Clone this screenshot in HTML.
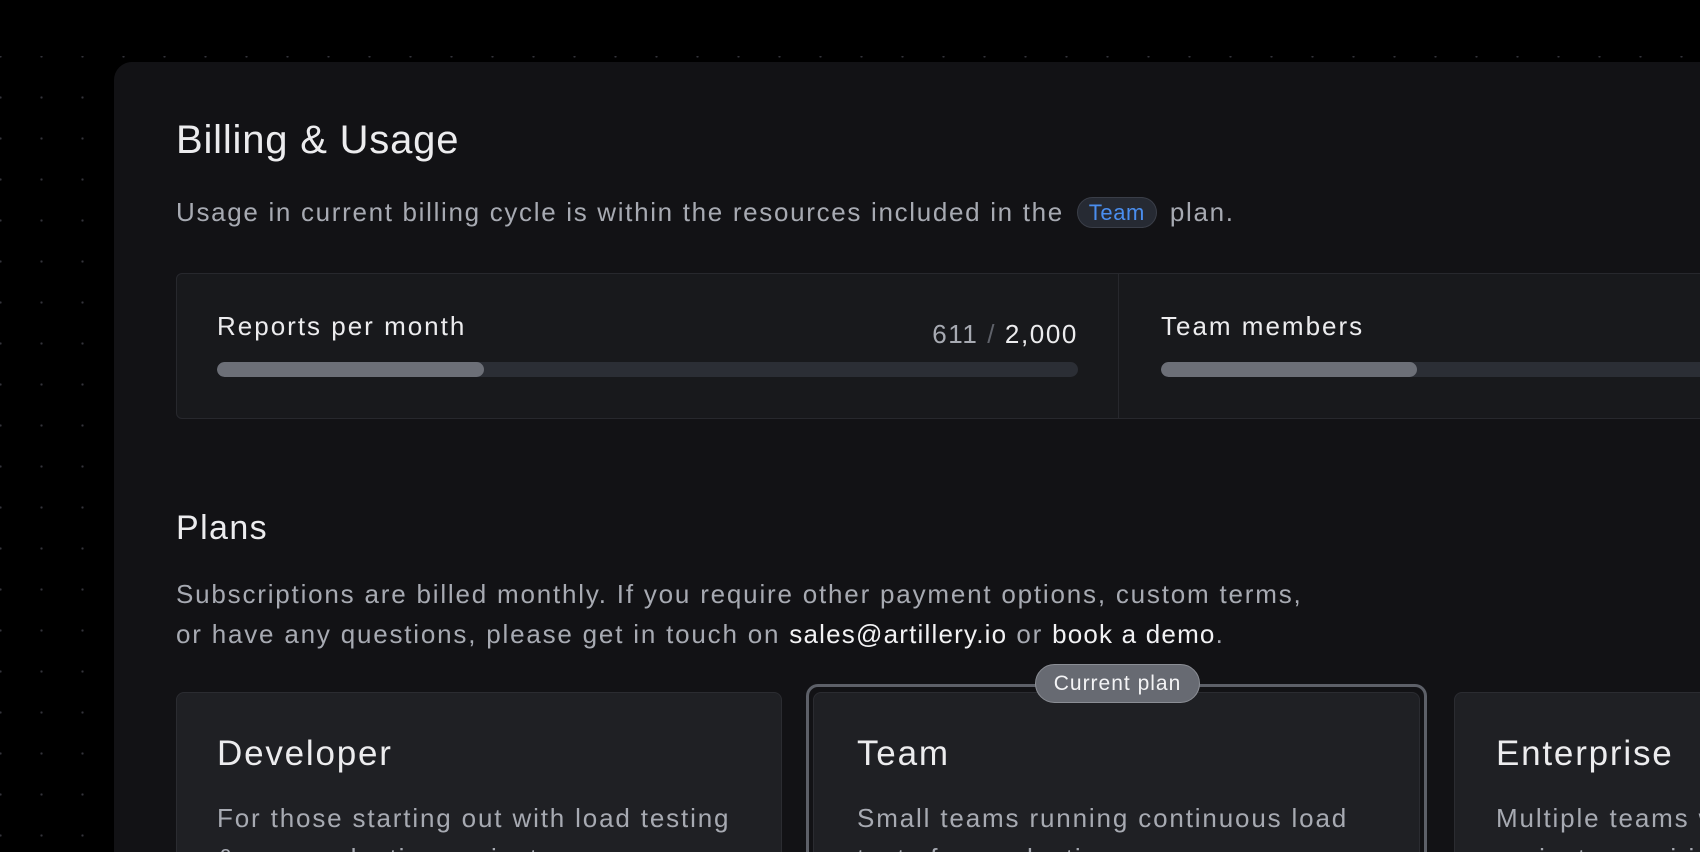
<!DOCTYPE html>
<html><head><meta charset="utf-8">
<style>
*{margin:0;padding:0;box-sizing:border-box}
html,body{width:1700px;height:852px;overflow:hidden;background:#000;font-family:"Liberation Sans","DejaVu Sans",sans-serif;position:relative}
.wrap{position:absolute;left:0;top:0;width:1700px;height:852px;overflow:hidden}
.dots{position:absolute;left:0;top:56px;width:1700px;height:796px;background-image:radial-gradient(circle,#34343a 1px,transparent 1.3px);background-size:41px 41px;background-position:-20px -20px}
.panel{position:absolute;left:114px;top:62px;width:1586px;height:790px;background:#121215;border-radius:18px 0 0 0}
.a{position:absolute;white-space:nowrap}
h1{position:absolute;left:176px;top:116px;font-size:40px;font-weight:500;color:#ececee;line-height:48px;letter-spacing:0.8px}
.sub{left:176px;top:196px;font-size:26px;color:#a7aab2;line-height:32px;letter-spacing:1.68px}
.pill{display:inline-block;background:#262a33;border:1px solid #3a3e48;border-radius:16px;color:#4a8eef;font-size:22px;padding:0 11px;line-height:29px;vertical-align:1px;margin:0 4px;letter-spacing:0.6px}
.usage{position:absolute;left:176px;top:273px;width:1600px;height:146px;background:#18191c;border:1px solid #27282d;border-radius:6px}
.div{position:absolute;left:1118px;top:273px;width:1px;height:146px;background:#27282d}
.lbl{font-size:26px;color:#ececee;font-weight:500;line-height:32px;letter-spacing:2px}
.bar{position:absolute;height:15px;border-radius:8px;background:#2b2e35;overflow:hidden}
.bar i{position:absolute;left:0;top:0;bottom:0;background:#6c6f77;border-radius:8px}
h2{position:absolute;left:176px;top:508px;font-size:34px;font-weight:500;color:#ececee;line-height:40px;letter-spacing:1.4px}
.p{left:176px;top:574px;font-size:26px;color:#a7aab2;line-height:40px;letter-spacing:1.8px}
.p b{font-weight:normal;color:#f2f2f4;letter-spacing:1.2px}
.card{position:absolute;top:692px;height:170px;background:#1f2024;border:1px solid #2b2c31;border-radius:8px}
.ring{position:absolute;left:806px;top:684px;width:621px;height:180px;border:3px solid #5d6068;border-radius:12px}
.ct{font-size:35px;color:#ececee;font-weight:500;line-height:40px;letter-spacing:1.8px}
.cd{font-size:26px;color:#a7aab2;line-height:40px;letter-spacing:1.85px}
.badge{position:absolute;left:1035px;top:664px;width:165px;height:39px;background:#676a72;border:1px solid #8b8e95;border-radius:20px;color:#f4f4f6;font-size:21px;text-align:center;line-height:37px;letter-spacing:1px}
</style></head><body><div class="wrap">
<div class="dots"></div>
<div class="panel"></div>
<h1>Billing &amp; Usage</h1>
<div class="a sub">Usage in current billing cycle is within the resources included in the <span class="pill">Team</span> plan.</div>
<div class="usage"></div>
<div class="div"></div>
<div class="a lbl" style="left:217px;top:310px">Reports per month</div>
<div class="a" style="right:622px;top:318px;font-size:26px;line-height:32px;color:#a7aab2;letter-spacing:1.6px">611 <span style="color:#5f626a">/</span> <span style="color:#ececee">2,000</span></div>
<div class="bar" style="left:217px;top:362px;width:861px"><i style="width:267px"></i></div>
<div class="a lbl" style="left:1161px;top:310px">Team members</div>
<div class="bar" style="left:1161px;top:362px;width:600px"><i style="width:256px"></i></div>
<h2>Plans</h2>
<div class="a p">Subscriptions are billed monthly. If you require other payment options, custom terms,<br>or have any questions, please get in touch on <b>sales@artillery.io</b> or <b>book a demo</b>.</div>
<div class="card" style="left:176px;width:606px"></div>
<div class="ring"></div>
<div class="card" style="left:813px;width:607px"></div>
<div class="card" style="left:1454px;width:246px;border-right:none;border-radius:8px 0 0 8px"></div>
<div class="badge">Current plan</div>
<div class="a ct" style="left:217px;top:734px">Developer</div>
<div class="a cd" style="left:217px;top:798px;height:54px;overflow:hidden">For those starting out with load testing<br>&amp; pre-production projects</div>
<div class="a ct" style="left:857px;top:734px">Team</div>
<div class="a cd" style="left:857px;top:798px;height:54px;overflow:hidden">Small teams running continuous load<br>tests for production</div>
<div class="a ct" style="left:1496px;top:734px">Enterprise</div>
<div class="a cd" style="left:1496px;top:798px;height:54px;width:204px;overflow:hidden">Multiple teams with<br>projects requiring</div>
</div></body></html>
